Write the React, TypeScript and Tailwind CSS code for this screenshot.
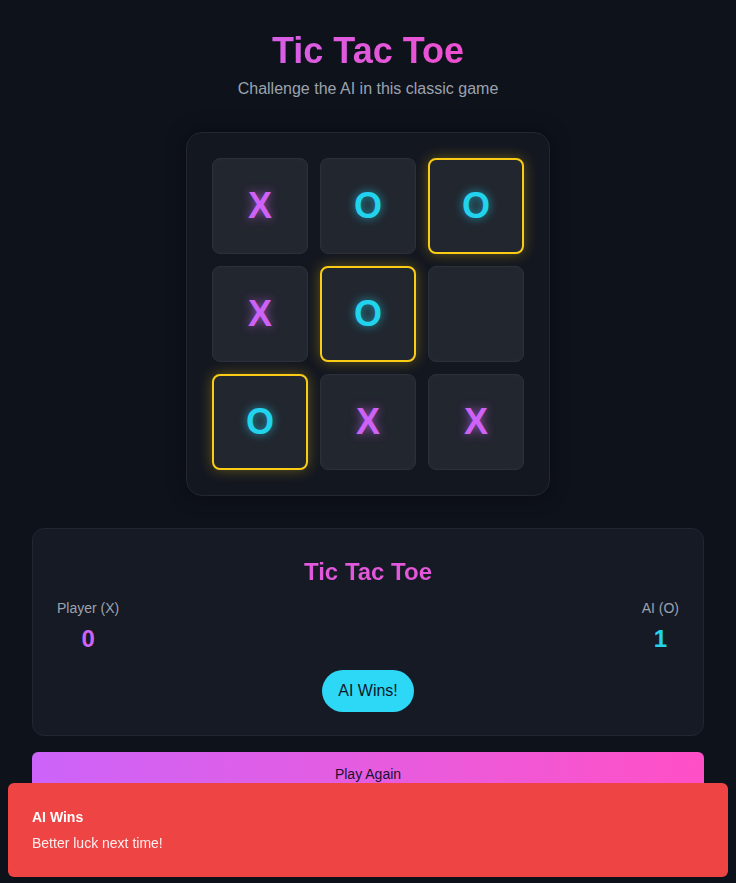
import React from "react";

type Mark = "X" | "O" | null;

const board: Mark[] = ["X", "O", "O", "X", "O", null, "O", "X", "X"];
const winLine = [2, 4, 6];

function Cell({ value, win }: { value: Mark; win: boolean }) {
  return (
    <div
      className={
        "w-[96px] h-[96px] rounded-lg flex items-center justify-center bg-[#22262f] " +
        (win
          ? "border-2 border-[#facc15] shadow-[0_0_14px_rgba(250,204,21,0.35)]"
          : "border border-[#2c3039] shadow-[inset_0_0_12px_rgba(255,255,255,0.02)]")
      }
    >
      {value === "X" && (
        <span className="text-4xl font-bold text-[#cf62f6] [text-shadow:0_0_10px_rgba(207,98,246,0.7)]">
          X
        </span>
      )}
      {value === "O" && (
        <span className="text-4xl font-bold text-[#22d3ee] [text-shadow:0_0_10px_rgba(34,211,238,0.7)]">
          O
        </span>
      )}
    </div>
  );
}

export default function App() {
  return (
    <div className="relative min-h-[883px] bg-[#0e121b] font-['Liberation_Sans',Arial,sans-serif] text-white overflow-hidden">
      <main className="flex flex-col items-center px-8 pt-[31px]">
        <h1 className="text-4xl font-bold leading-10 bg-gradient-to-r from-[#d65fe6] to-[#ee4fd0] bg-clip-text text-transparent">
          Tic Tac Toe
        </h1>
        <p className="mt-[6px] text-base text-[#9ca3af]">Challenge the AI in this classic game</p>

        <div className="mt-[31px] p-[25px] rounded-2xl border border-[#232733] bg-[#131720] shadow-[0_0_20px_rgba(0,0,0,0.4)]">
          <div className="grid grid-cols-3 gap-3">
            {board.map((v, i) => (
              <Cell key={i} value={v} win={winLine.includes(i)} />
            ))}
          </div>
        </div>

        <section className="mt-[32px] w-full rounded-xl border border-[#222631] bg-[#161a24] px-6 pt-[27px] pb-[23px]">
          <h2 className="text-center text-2xl font-bold leading-8 bg-gradient-to-r from-[#d65fe6] to-[#ee4fd0] bg-clip-text text-transparent">
            Tic Tac Toe
          </h2>
          <div className="mt-[10px] flex justify-between">
            <div className="flex flex-col items-center">
              <span className="text-sm text-[#9ca3af]">Player (X)</span>
              <span className="mt-[5px] text-2xl font-bold text-[#cf62f6]">0</span>
            </div>
            <div className="flex flex-col items-center">
              <span className="text-sm text-[#9ca3af]">AI (O)</span>
              <span className="mt-[5px] text-2xl font-bold text-[#22d3ee]">1</span>
            </div>
          </div>
          <div className="mt-[15px] flex justify-center">
            <span className="rounded-full bg-[#2dd8f6] px-4 h-[42px] flex items-center text-base font-medium text-[#0f172a]">
              AI Wins!
            </span>
          </div>
        </section>

        <button className="mt-4 w-full h-11 rounded-md bg-gradient-to-r from-[#cc63f9] to-[#ff4fc6] text-sm font-medium text-[#1a1033]">
          Play Again
        </button>
      </main>

      <div className="fixed left-2 right-2 bottom-[6px] rounded-md bg-[#ef4444] p-6 shadow-lg">
        <div className="text-sm font-semibold text-white">AI Wins</div>
        <div className="mt-[6px] text-sm text-white/90">Better luck next time!</div>
      </div>
    </div>
  );
}
